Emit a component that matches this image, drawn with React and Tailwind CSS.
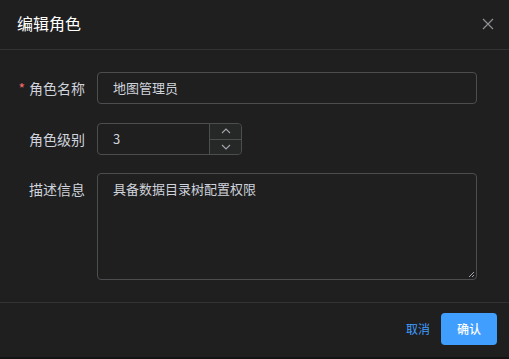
import React from 'react';

const font = { fontFamily: '"Noto Sans CJK SC", "Noto Sans", sans-serif' };

function Label({ children, required }) {
  return (
    <div className="w-[85px] h-[32px] flex items-center justify-end text-[14px] text-[#cfd3dc] shrink-0">
      {required && <span className="text-[#f56c6c] mr-[4px]">*</span>}
      {children}
    </div>
  );
}

export default function App() {
  return (
    <div className="w-[509px] h-[359px] bg-[#141414]" style={font}>
      <div className="w-[509px] h-[357px] bg-[#1f1f1f] flex flex-col">
        {/* Header */}
        <div className="h-[50px] pl-[17px] pr-[15px] flex items-center justify-between border-b border-[#333335] shrink-0">
          <span className="text-[16px] text-white leading-none pb-[3px]">编辑角色</span>
          <svg width="12" height="12" viewBox="0 0 12 12" className="mb-[2px]">
            <path d="M1 1 L11 11 M11 1 L1 11" stroke="#8d9095" strokeWidth="1.2" fill="none" />
          </svg>
        </div>

        {/* Body */}
        <div className="pt-[22px] flex flex-col">
          <div className="flex items-start mb-[19px]">
            <Label required>角色名称</Label>
            <div className="ml-[12px] w-[380px] h-[32px] border border-[#4c4d4f] rounded-[4px] px-[15px] flex items-center text-[13px] text-[#cfd3dc]">
              地图管理员
            </div>
          </div>

          <div className="flex items-start mb-[18px]">
            <Label>角色级别</Label>
            <div className="ml-[12px] w-[145px] h-[32px] border border-[#4c4d4f] rounded-[4px] flex text-[13px] text-[#cfd3dc]">
              <div className="flex-1 px-[15px] flex items-center">3</div>
              <div className="w-[32px] flex flex-col border-l border-[#4c4d4f] bg-[#262727] rounded-r-[4px]">
                <div className="flex-1 flex items-center justify-center border-b border-[#4c4d4f]">
                  <svg width="10" height="6" viewBox="0 0 10 6">
                    <path d="M1 5 L5 1 L9 5" stroke="#a3a6ad" strokeWidth="1.1" fill="none" />
                  </svg>
                </div>
                <div className="flex-1 flex items-center justify-center">
                  <svg width="10" height="6" viewBox="0 0 10 6">
                    <path d="M1 1 L5 5 L9 1" stroke="#a3a6ad" strokeWidth="1.1" fill="none" />
                  </svg>
                </div>
              </div>
            </div>
          </div>

          <div className="flex items-start">
            <Label>描述信息</Label>
            <div className="ml-[12px] w-[380px] h-[107px] border border-[#4c4d4f] rounded-[4px] px-[15px] py-[4px] text-[13px] leading-[21px] text-[#cfd3dc] relative">
              具备数据目录树配置权限
              <svg width="7" height="7" viewBox="0 0 7 7" className="absolute right-[1px] bottom-[1px]">
                <path d="M1 6 L6 1 M4 6 L6 4" stroke="#a3a6ad" strokeWidth="1" fill="none" />
              </svg>
            </div>
          </div>
        </div>

        {/* Footer */}
        <div className="mt-[22px] border-t border-[#333335] flex-1 flex items-center justify-end pr-[12px] pb-[2px]">
          <span className="text-[12px] text-[#409eff] mr-[11px]">取消</span>
          <div className="w-[56px] h-[32px] rounded-[4px] bg-[#409eff] flex items-center justify-center text-[12px] font-medium text-white">
            确认
          </div>
        </div>
      </div>
    </div>
  );
}
